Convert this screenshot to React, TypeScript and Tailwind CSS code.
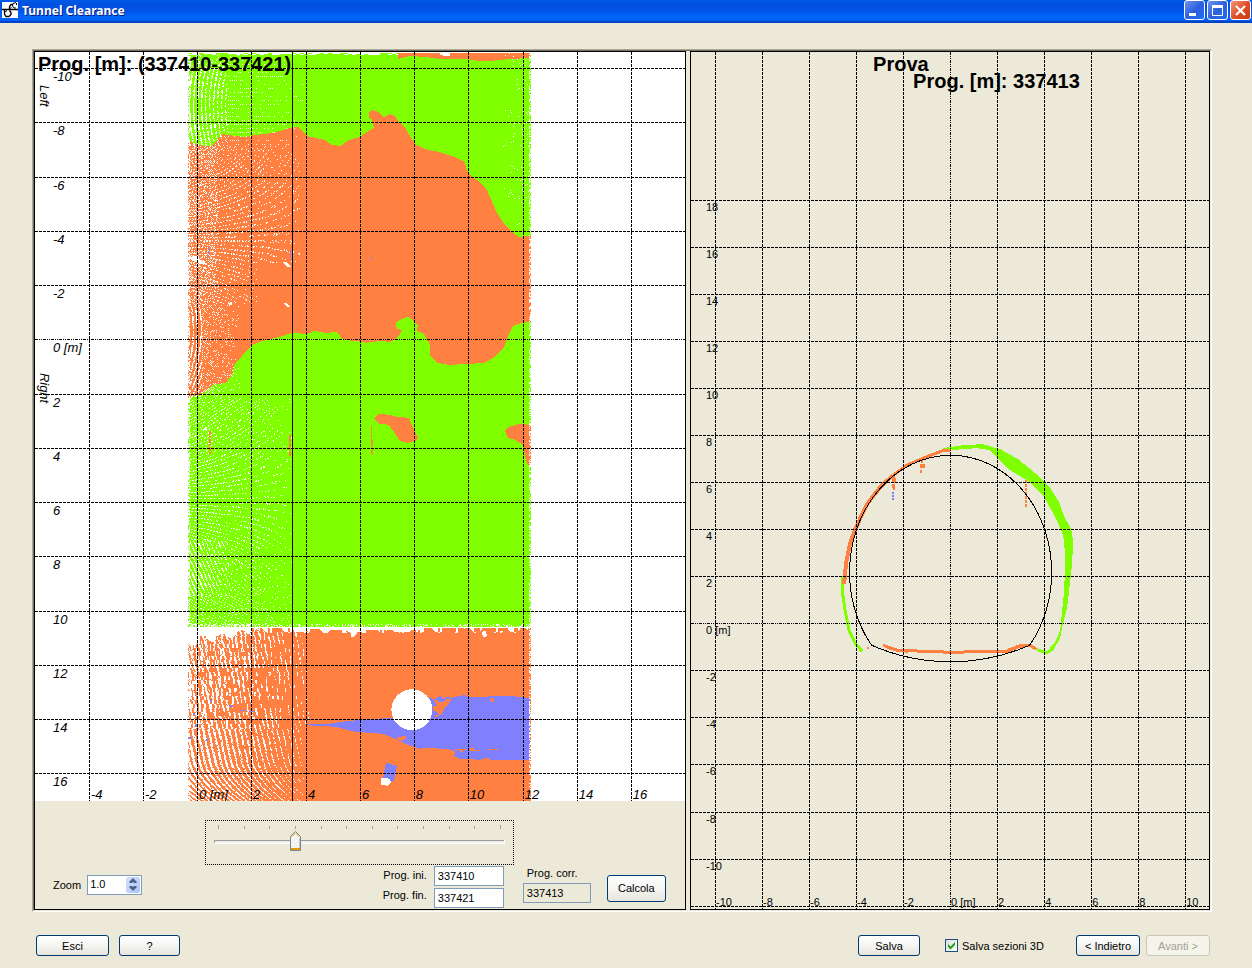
import { useState } from "react";
import type { ButtonHTMLAttributes } from "react";

const GREEN = "#80ff00";
const ORANGE = "#ff8040";
const BLUE = "#8080ff";

/* Deterministic noise, 0..1, for a scan cell. */
function noise(x: number, y: number): number {
  let h = (x * 374761393 + y * 668265263) | 0;
  h = Math.imul(h ^ (h >>> 13), 1274126177);
  return ((h ^ (h >>> 16)) >>> 0) / 4294967295;
}

/* Scan rows fan out from the middle of the vault; returns sit on a 3-cell lattice along them. */
function onLattice(x: number, y: number, centre: number): boolean {
  const slope = Math.max(-0.6, Math.min(0.6, (centre - y) / 150));
  const row = Math.floor(y + slope * (x - 188));
  return row % 3 === 0 && (x + Math.floor(row / 3)) % 3 !== 0;
}

/* Cells of the tunnel scan that received no laser return. */
function isHole(x: number, y: number): boolean {
  const n = noise(x, y);
  if (x <= 189 && n < 0.5) return true;
  if (x >= 529 && n < 0.45) return true;
  if (y <= 54 && noise(x >> 2, y) < 0.5 && x < 398) return true;
  if (y < 624) {
    if (x > 502 && y < 225) {
      return (x + 2 * y) % 5 === 0 && n < ((x - 502) / 28) * 0.34 && Math.sin(y / 9) > -0.5;
    }
    if (x > 306) return false;
    const d = x - 188;
    if (y < 146) {
      if (y < 60) return n < 0.1 && d < 60;
      if (d < 40) {
        const r = Math.hypot(x - 330, (y - 105) * 0.9);
        return Math.sin((r * 6.283) / 4) > 0.25 && n < 0.85 - d / 90;
      }
      return y % 4 < 1 && x % 2 === 0 && n < 0.75 - d / 160;
    }
    if (y < 305) {
      const t = 1 - d / (y > 262 ? 70 : 112);
      if (t <= 0) return false;
      return (onLattice(x, y, 240) && n < 0.16 + t * 0.6) || (d < 30 && (x + y) % 2 === 0 && n < 0.3);
    }
    if (y < 398) {
      if (d < 14) return Math.sin(((x + (y - 330) * (y - 330) * 0.004) * 6.283) / 4) > 0.2 && n < 0.75;
      const t = 1 - d / 52;
      return t > 0 && (x + y) % 2 === 0 && n < t * 0.4 + 0.05;
    }
    const t = 1 - d / 104;
    if (t <= 0) return false;
    if (y > 540 && y < 596 && d < 42) {
      return Math.sin(((x - (y - 540) * 0.45) * 6.283) / 4) > 0.3 && n < 0.8 - d / 90;
    }
    return onLattice(x, y, 500) && n < 0.08 + t * 0.65;
  }
  if (y < 627) return n < (x < 250 ? 0.5 : 0.25);
  const edge = x < 250 ? 643 - (x - 188) * 0.2 : 630;
  if (y < edge + Math.sin(x / 3) * 3) return noise(x >> 1, y >> 2) < (x < 250 ? 0.9 : 0.45);
  if (y < 628 || x > 322) return false;
  const t = 1 - (x - 188) / 132;
  if (y > 728) {
    const bend = y > 760 ? (y - 760) * (y - 760) * 0.014 : 0;
    const u = x - (y - 728) * 0.22 - bend;
    return Math.sin((u * 6.283) / 5.3 + noise(x >> 2, y >> 3)) > 1.16 - t * 1.25 && n < 0.55 + t * 0.4;
  }
  const u = x - (y - 690) * 0.15;
  const broken = noise(Math.floor(u / 4), y >> 2);
  return Math.sin((u * 6.283) / 4.6 + broken * 4) > 1.1 - t * 1.3 && broken < 0.3 + t * 0.7 && n < 0.92;
}

function buildHoles(): string {
  const parts: string[] = [];
  for (let y = 53; y < 801; y++) {
    let start = -1;
    for (let x = 188; x <= 531; x++) {
      const hole = x < 531 && isHole(x, y);
      if (hole && start < 0) start = x;
      if (!hole && start >= 0) {
        parts.push(`M${start} ${y}h${x - start}v1h${start - x}z`);
        start = -1;
      }
    }
  }
  return parts.join("");
}

const HOLES = buildHoles();

const MAP_X = [89, 143, 197, 251, 306, 360, 414, 468, 523, 577, 631];
const MAP_Y = [68, 122, 177, 231, 285, 339, 394, 448, 502, 556, 611, 665, 719, 773];
const SEC_X = [715, 762, 809, 856, 903, 950, 997, 1044, 1091, 1138, 1185];
const SEC_Y = [200, 247, 294, 341, 388, 435, 482, 529, 576, 623, 670, 717, 764, 812, 859, 906];

function withUnit(n: number): string {
  return n === 0 ? "0 [m]" : String(n);
}

function Grid({ xs, ys, x0, x1, y0, y1, zx, zy }: {
  xs: number[]; ys: number[]; x0: number; x1: number; y0: number; y1: number; zx: number; zy: number;
}) {
  return (
    <g stroke="#000" shapeRendering="crispEdges">
      {xs.map((x) => (
        <line key={"x" + x} x1={x + 0.5} x2={x + 0.5} y1={y0} y2={y1} strokeDasharray={x === zx ? "3 1 1 1 1 1" : "3 1"} />
      ))}
      {ys.map((y) => (
        <line key={"y" + y} x1={x0} x2={x1} y1={y + 0.5} y2={y + 0.5} strokeDasharray={y === zy ? "3 1 1 1 1 1" : "3 1"} />
      ))}
    </g>
  );
}

function TunnelMap() {
  return (
    <svg viewBox="35 52 650 749" className="block h-auto w-full bg-white font-['Liberation_Sans',Arial,sans-serif]" role="img" aria-label="Tunnel map">
      <g shapeRendering="crispEdges">
        <rect x="188" y="53" width="343" height="574" fill={GREEN} />
        <path fill={ORANGE} d="M398 53H530V58L510 59L490 61L480 61L465 59L440 59L425 57L410 56L398 59Z" />
        <path fill="#fff" d="M440 53h10v3h-4l-6-1z" />
        <path fill={ORANGE} d="M188 141L195 144L204 146L212 146L218 139L222 134L235 136L245 137L255 135L265 134L277 132L290 128L299 127L303 131L307 136L320 139L325 140L332 145L341 146L349 140L360 137L367 132L374 128L372 119L369 118L369 112L373 110L378 112L384 117L390 114L395 116L399 122L405 127L410 136L416 145L428 150L440 152L455 157L465 162L467 170L472 177L480 182L487 190L492 201L497 213L503 222L512 232L519 237L531 236V322L522 323L513 326L508 337L504 348L495 357L485 363L470 364L450 365L437 363L430 355L430 345L424 334L417 331L418 325L414 321L408 317L402 319L396 323L397 329L402 330L401 333L396 339L390 342L380 341L367 343L355 341L343 340L337 332L325 333L315 331L307 334L292 333L280 337L260 342L252 345L244 354L235 364L232 375L226 383L213 385L204 393L188 398Z" />
        <path fill={ORANGE} d="M374 419L379 414L390 415L397 417L409 418L412 425L415 432L418 437L416 441L408 443L400 441L394 432L389 425L380 424ZM505 431L509 427L520 424L531 425V467L527 463L525 455L523 445L515 440L508 438Z" />
        <rect x="188" y="628" width="343" height="173" fill={ORANGE} />
        <path fill="#fff" d="M294 627h126v3h-8l-2 2h-15l-3-2h-24l-4 2h-6l-4 5h-3v-4l-6-3h-14l-3 3h-5l-4-4h-7l-6 3h-12zM482 632l4-1v3l2 1l-2 2h-3zM500 631h4l-3 3z" />
        <path fill={BLUE} d="M298 725L330 724L342 722L362 720L392 718L412 730L430 715L429 697L434 700L440 696L444 700L446 697L452 698L465 695L468 697L480 697L510 696L528 698L530 700V760L490 760L488 758L480 760L460 759L454 756L456 752L452 750L430 748L420 749L408 745L398 740L383 734L355 732L335 727Z" />
        <path fill={ORANGE} d="M434 700h4v2h6l3-3h5l-4 6l-3 3l-4 7l-6 3v-3h4l-3-4h-3v-5h4zM490 698l4 1v3h-3zM455 749h12v1h-4v2h-3v-2h-5zM470 748h4v2h6v1h-10zM486 749h12v1h-9zM396 738l10-2v3l-6 2z" />
        <path fill={BLUE} d="M386 763L397 766L394 782L383 780Z" />
        <path fill="#fff" d="M381 778L390 779L391 783L388 786L381 785Z" />
        <path fill="#fff" d="M189 257h7l12 7h-6l-11-4zM282 262h5l4 5h-3zM284 303h3l3 4h-3zM228 303l4-1v3h-3zM203 429l4-2v3l-4 1z" />
        <path fill="#fff" d={HOLES} />
        <path stroke={ORANGE} strokeWidth="2" strokeDasharray="4 1 2 1" fill="none" d="M210 431V454" />
        <path stroke={ORANGE} strokeWidth="1" strokeDasharray="4 1 2 1" fill="none" d="M371.500 426V455M372.500 440V455" />
        <path stroke={ORANGE} strokeWidth="2" strokeDasharray="7 1" fill="none" d="M290 435V456" />
        <path stroke={BLUE} strokeWidth="1" strokeDasharray="3 1" fill="none" d="M208.500 247V256M290.500 250V260M371.500 257V260" />
        <path fill={BLUE} d="M210 700h2v2h-2zM230 705h3v2h-3zM193 713h2v2h-2zM195 724h3v3h-3zM188 737h3v2h-3zM206 739h2v2h-2zM240 710h6v1h-6zM249 711h5v1h-5z" />
      </g>
      <circle cx="412" cy="710" r="20.500" fill="#fff" shapeRendering="crispEdges" />
      <Grid xs={MAP_X} ys={MAP_Y} x0={35} x1={685} y0={52} y1={801} zx={-1} zy={339} />
      <line x1="292.500" x2="292.500" y1="52" y2="801" stroke="#000" shapeRendering="crispEdges" />
      <g fontSize="13" fontStyle="italic">
        {MAP_Y.map((y, i) => (
          <text key={y} x="53" y={y + 13}>{withUnit(i * 2 - 10)}</text>
        ))}
        {MAP_X.map((x, i) => (
          <text key={x} x={x + 2} y="799">{withUnit(i * 2 - 4)}</text>
        ))}
        <text transform="translate(40 85) rotate(90)">Left</text>
        <text transform="translate(40 373) rotate(90)">Right</text>
      </g>
      <text x="38" y="71" fontSize="20" fontWeight="bold">Prog. [m]: (337410-337421)</text>
    </svg>
  );
}

function SectionPlot() {
  return (
    <svg viewBox="691 52 518 857" className="block h-auto w-full font-['Liberation_Sans',Arial,sans-serif]" role="img" aria-label="Tunnel section">
      <g shapeRendering="crispEdges" fill="none">
        <path fill={GREEN} d="M942 448L963 445L983 444L1000 449L1018 459L1034 472L1049 486L1059 502L1064 516L1071 529L1073 540L1072 563L1069 590L1067 607L1063 623L1060 638L1053 650L1047 654L1037 651L1037 648L1047 651L1055 642L1060 630L1062 610L1064 590L1065 563L1064 540L1062 532L1054 515L1044 497L1030 482L1010 470L998 458L990 450L977 448L950 450Z" />
        <path stroke={GREEN} strokeWidth="3" d="M843 576L842 590L845 610L849 630L855 643L862 651" />
        <path stroke={ORANGE} strokeWidth="4" d="M844 584L846 563L850 543L856 527L867 504L880 487L893 475" />
        <path stroke={ORANGE} strokeWidth="3" d="M893 475L907 465L923 458L944 450L950 450M883 645L897 650L950 652L1007 651L1020 646L1030 645L1036 649" />
        <path stroke={ORANGE} strokeWidth="3" d="M885 646L890 648L897 650L908 651M1008 650L1021 645L1030 645" />
        <path stroke={ORANGE} strokeWidth="2" strokeDasharray="3 1" d="M894 476V490M922 460V467M1026 480V508" />
        <path stroke={ORANGE} strokeWidth="4" d="M892 480h4M892 486h3M920 466h5" />
        <path stroke={ORANGE} strokeWidth="2" d="M921 470v3M867 648h2" />
        <path stroke={BLUE} strokeWidth="2" strokeDasharray="2 1" d="M893 492V501" />
        <path stroke="#000" d="M871.500 645A101 117 0 1 1 1029.500 645A197 197 0 0 1 871.500 645" />
      </g>
      <Grid xs={SEC_X} ys={SEC_Y} x0={691} x1={1209} y0={52} y1={909} zx={950} zy={623} />
      <g fontSize="11">
        {SEC_Y.slice(0, 15).map((y, i) => (
          <text key={y} x="706" y={y + 11}>{withUnit(18 - i * 2)}</text>
        ))}
        {SEC_X.map((x, i) => (
          <text key={x} x={x + 1} y="906">{withUnit(i * 2 - 10)}</text>
        ))}
      </g>
      <g fontSize="20" fontWeight="bold">
        <text x="873" y="71">Prova</text>
        <text x="913" y="88">Prog. [m]: 337413</text>
      </g>
    </svg>
  );
}

function XpButton({ className = "", ...rest }: ButtonHTMLAttributes<HTMLButtonElement>) {
  return (
    <button
      type="button"
      className={
        "flex items-center justify-center rounded-[3px] border border-[#003c74] bg-linear-to-b from-white via-[#f5f5f2] to-[#e6e4dc] leading-3 whitespace-nowrap disabled:border-[#c9c7ba] disabled:bg-none disabled:bg-[#f5f4ea] disabled:text-[#a1a192] " +
        className
      }
      {...rest}
    />
  );
}

function ProgressSlider({ value, onChange }: { value: number; onChange: (v: number) => void }) {
  const share = (value - 337410) / 11;
  return (
    <div className="relative h-[45px] w-[309px] border border-dotted border-black">
      <svg viewBox="0 0 307 43" className="block h-full w-full" shapeRendering="crispEdges" aria-hidden="true">
        {Array.from({ length: 12 }, (_, i) => (
          <rect key={i} x={12 + Math.round((i * 282) / 11)} y={i % 11 === 0 ? 4 : 5} width="1" height={i % 11 === 0 ? 4 : 3} fill="#a5a294" />
        ))}
        <rect x="8" y="19" width="291" height="4" fill="#fff" />
        <rect x="8" y="19" width="290" height="1" fill="#9d9c99" />
        <rect x="8" y="20" width="1" height="2" fill="#9d9c99" />
        <rect x="9" y="20" width="289" height="2" fill="#f0efe8" />
        <g transform={`translate(${7 + Math.round(share * 282)} 10)`} shapeRendering="auto">
          <path d="M.5 5.500L5.500.5L10.500 5.500V19.500H.5Z" fill="#f3f3ef" stroke="#778892" />
          <path d="M1.500 6L5.500 2L9.500 6" fill="none" stroke="#e5a638" />
          <path d="M9.500 7V17" stroke="#c6c8c4" />
          <rect x="1" y="17" width="9" height="2" fill="#e59700" />
        </g>
      </svg>
      <input
        type="range"
        aria-label="Progressiva"
        min={337410}
        max={337421}
        value={value}
        onChange={(e) => onChange(Number(e.target.value))}
        className="absolute inset-0 h-full w-full opacity-0"
      />
    </div>
  );
}

const FIELD = "h-5 border border-[#7f9db9] px-[3px] leading-3 outline-none";

function Controls() {
  const [value, setValue] = useState(337413);
  const [zoom, setZoom] = useState(1);
  return (
    <div className="flex flex-1 flex-col pt-[19px]">
      <div className="flex justify-center">
        <ProgressSlider value={value} onChange={setValue} />
      </div>
      <div className="flex items-start justify-between pr-[19px] pl-[18px]">
        <div className="mt-[10px] flex items-center gap-[6px]">
          <label htmlFor="zoom">Zoom</label>
          <div className="flex h-5 w-[55px] border border-[#7f9db9] bg-white p-px">
            <input id="zoom" readOnly value={zoom.toFixed(1)} className="w-full min-w-0 flex-1 pb-[2px] pl-px leading-3 outline-none" />
            <div className="flex w-[14px] flex-col rounded-[2px] bg-linear-to-br from-[#d4e0fd] to-[#aec4f8]">
              <button type="button" aria-label="Zoom in" onClick={() => setZoom(zoom + 0.5)} className="flex flex-1 items-center justify-center">
                <svg width="8" height="5" viewBox="0 0 8 5"><path d="M0 4L4 0L8 4L7 5H5L4 4L3 5H1Z" fill="#4d6185" /></svg>
              </button>
              <button type="button" aria-label="Zoom out" onClick={() => setZoom(Math.max(0.5, zoom - 0.5))} className="flex flex-1 items-center justify-center">
                <svg width="8" height="5" viewBox="0 0 8 5"><path d="M0 1L4 5L8 1L7 0H5L4 1L3 0H1Z" fill="#4d6185" /></svg>
              </button>
            </div>
          </div>
        </div>
        <div className="flex items-start">
          <div className="mt-px grid grid-cols-[auto_70px] gap-x-[7px] gap-y-[2px] text-right">
            <label htmlFor="ini" className="leading-[18px]">Prog. ini.</label>
            <input id="ini" defaultValue="337410" className={FIELD + " bg-white"} />
            <label htmlFor="fin" className="leading-[14px]">Prog. fin.</label>
            <input id="fin" defaultValue="337421" className={FIELD + " bg-white"} />
          </div>
          <div className="ml-[19px] flex w-[68px] flex-col gap-1">
            <label htmlFor="corr" className="pt-[2px] pl-1 leading-3 whitespace-nowrap">Prog. corr.</label>
            <input id="corr" readOnly value={value} className={FIELD + " bg-transparent"} />
          </div>
          <XpButton className="mt-[10px] ml-4 h-[27px] w-[59px]">Calcola</XpButton>
        </div>
      </div>
    </div>
  );
}

const CAPTION = "flex h-5 w-[21px] items-center justify-center rounded-[3px] border border-white";

function TitleBar() {
  return (
    <header className="flex h-[23px] items-start justify-between bg-[linear-gradient(180deg,#0058e6_0%,#0050dd_25%,#0056ea_50%,#0066ff_72%,#0062f8_88%,#0046cf_92%,#003fc0_100%)] pr-px pl-[2px]">
      <div className="flex items-center gap-1 pt-px">
        <svg width="16" height="16" viewBox="0 0 16 16" aria-hidden="true">
          <rect width="16" height="16" fill="#fff" />
          <path d="M0 7.500H16M7.500 8V4.500L9 2.500H11M2.500 8V12L4 14.500H7L9 12.500V10.500L7.500 8.500" fill="none" stroke="#000" strokeWidth="1.300" />
          <path d="M14 .5L11 1.500L10.500 4L12 6H14M14.500 1V3M5 8.500L3 10M9.500 5.500L7 7" fill="none" stroke="#000" />
        </svg>
        <h1 className="pt-[2px] font-['Noto_Sans','Open_Sans',sans-serif] text-[12px] leading-4 font-bold text-white [text-shadow:1px_1px_0_#0a1883]">Tunnel Clearance</h1>
      </div>
      <div className="flex gap-[2px]">
        <button type="button" aria-label="Minimize" className={CAPTION + " bg-linear-to-br from-[#6c93f0] via-[#2f60dc] to-[#1f6df5]"}>
          <svg width="15" height="15" viewBox="0 0 15 15"><rect x="2" y="10" width="7" height="3" fill="#fff" /></svg>
        </button>
        <button type="button" aria-label="Maximize" className={CAPTION + " bg-linear-to-br from-[#6c93f0] via-[#2f60dc] to-[#1f6df5]"}>
          <svg width="15" height="15" viewBox="0 0 15 15" shapeRendering="crispEdges"><path d="M2 2h11v11H2zM3 5v7h9V5z" fill="#fff" fillRule="evenodd" /></svg>
        </button>
        <button type="button" aria-label="Close" className={CAPTION + " bg-linear-to-br from-[#f0967c] via-[#e04f29] to-[#c93a10]"}>
          <svg width="15" height="15" viewBox="0 0 15 15"><path d="M3 3L12 12M12 3L3 12" stroke="#fff" strokeWidth="2.200" /></svg>
        </button>
      </div>
    </header>
  );
}

export default function App() {
  const [save3d, setSave3d] = useState(true);
  return (
    <div className="flex min-h-screen flex-col bg-[#ece9d8] font-['Liberation_Sans',Arial,sans-serif] text-[11px] leading-3 text-black">
      <TitleBar />
      <main className="pt-[26px] pr-10 pl-8">
        <div className="border border-t-[#aca899] border-r-white border-b-white border-l-[#aca899]">
          <div className="flex gap-1 border border-t-[#716f64] border-r-[#f1efe2] border-b-[#ece9d8] border-l-[#716f64]">
            <section className="flex min-w-0 flex-[652_1_0%] flex-col border border-black">
              <TunnelMap />
              <Controls />
            </section>
            <section className="min-w-0 flex-[520_1_0%] border border-black">
              <SectionPlot />
            </section>
          </div>
        </div>
      </main>
      <footer className="flex items-center justify-between pt-[23px] pr-[42px] pb-[11px] pl-9">
        <div className="flex gap-[10px]">
          <XpButton className="h-[21px] w-[73px]">Esci</XpButton>
          <XpButton className="h-[21px] w-[61px]">?</XpButton>
        </div>
        <div className="flex items-center">
          <XpButton className="h-[21px] w-[62px]">Salva</XpButton>
          <label className="ml-[25px] flex w-[131px] items-center gap-1 whitespace-nowrap">
            <span className="relative flex size-[13px]">
              <input
                type="checkbox"
                checked={save3d}
                onChange={(e) => setSave3d(e.target.checked)}
                className="size-[13px] appearance-none border border-[#1c5180] bg-linear-to-br from-[#dcdcd7] to-white"
              />
              {save3d && (
                <svg viewBox="0 0 13 13" className="pointer-events-none absolute inset-0" aria-hidden="true">
                  <path d="M3 5V8L5.500 10.500L10 6V3L5.500 7.500Z" fill="#21a121" />
                </svg>
              )}
            </span>
            Salva sezioni 3D
          </label>
          <XpButton className="h-[21px] w-16">&lt; Indietro</XpButton>
          <XpButton className="ml-[6px] h-[21px] w-16" disabled>Avanti &gt;</XpButton>
        </div>
      </footer>
    </div>
  );
}
